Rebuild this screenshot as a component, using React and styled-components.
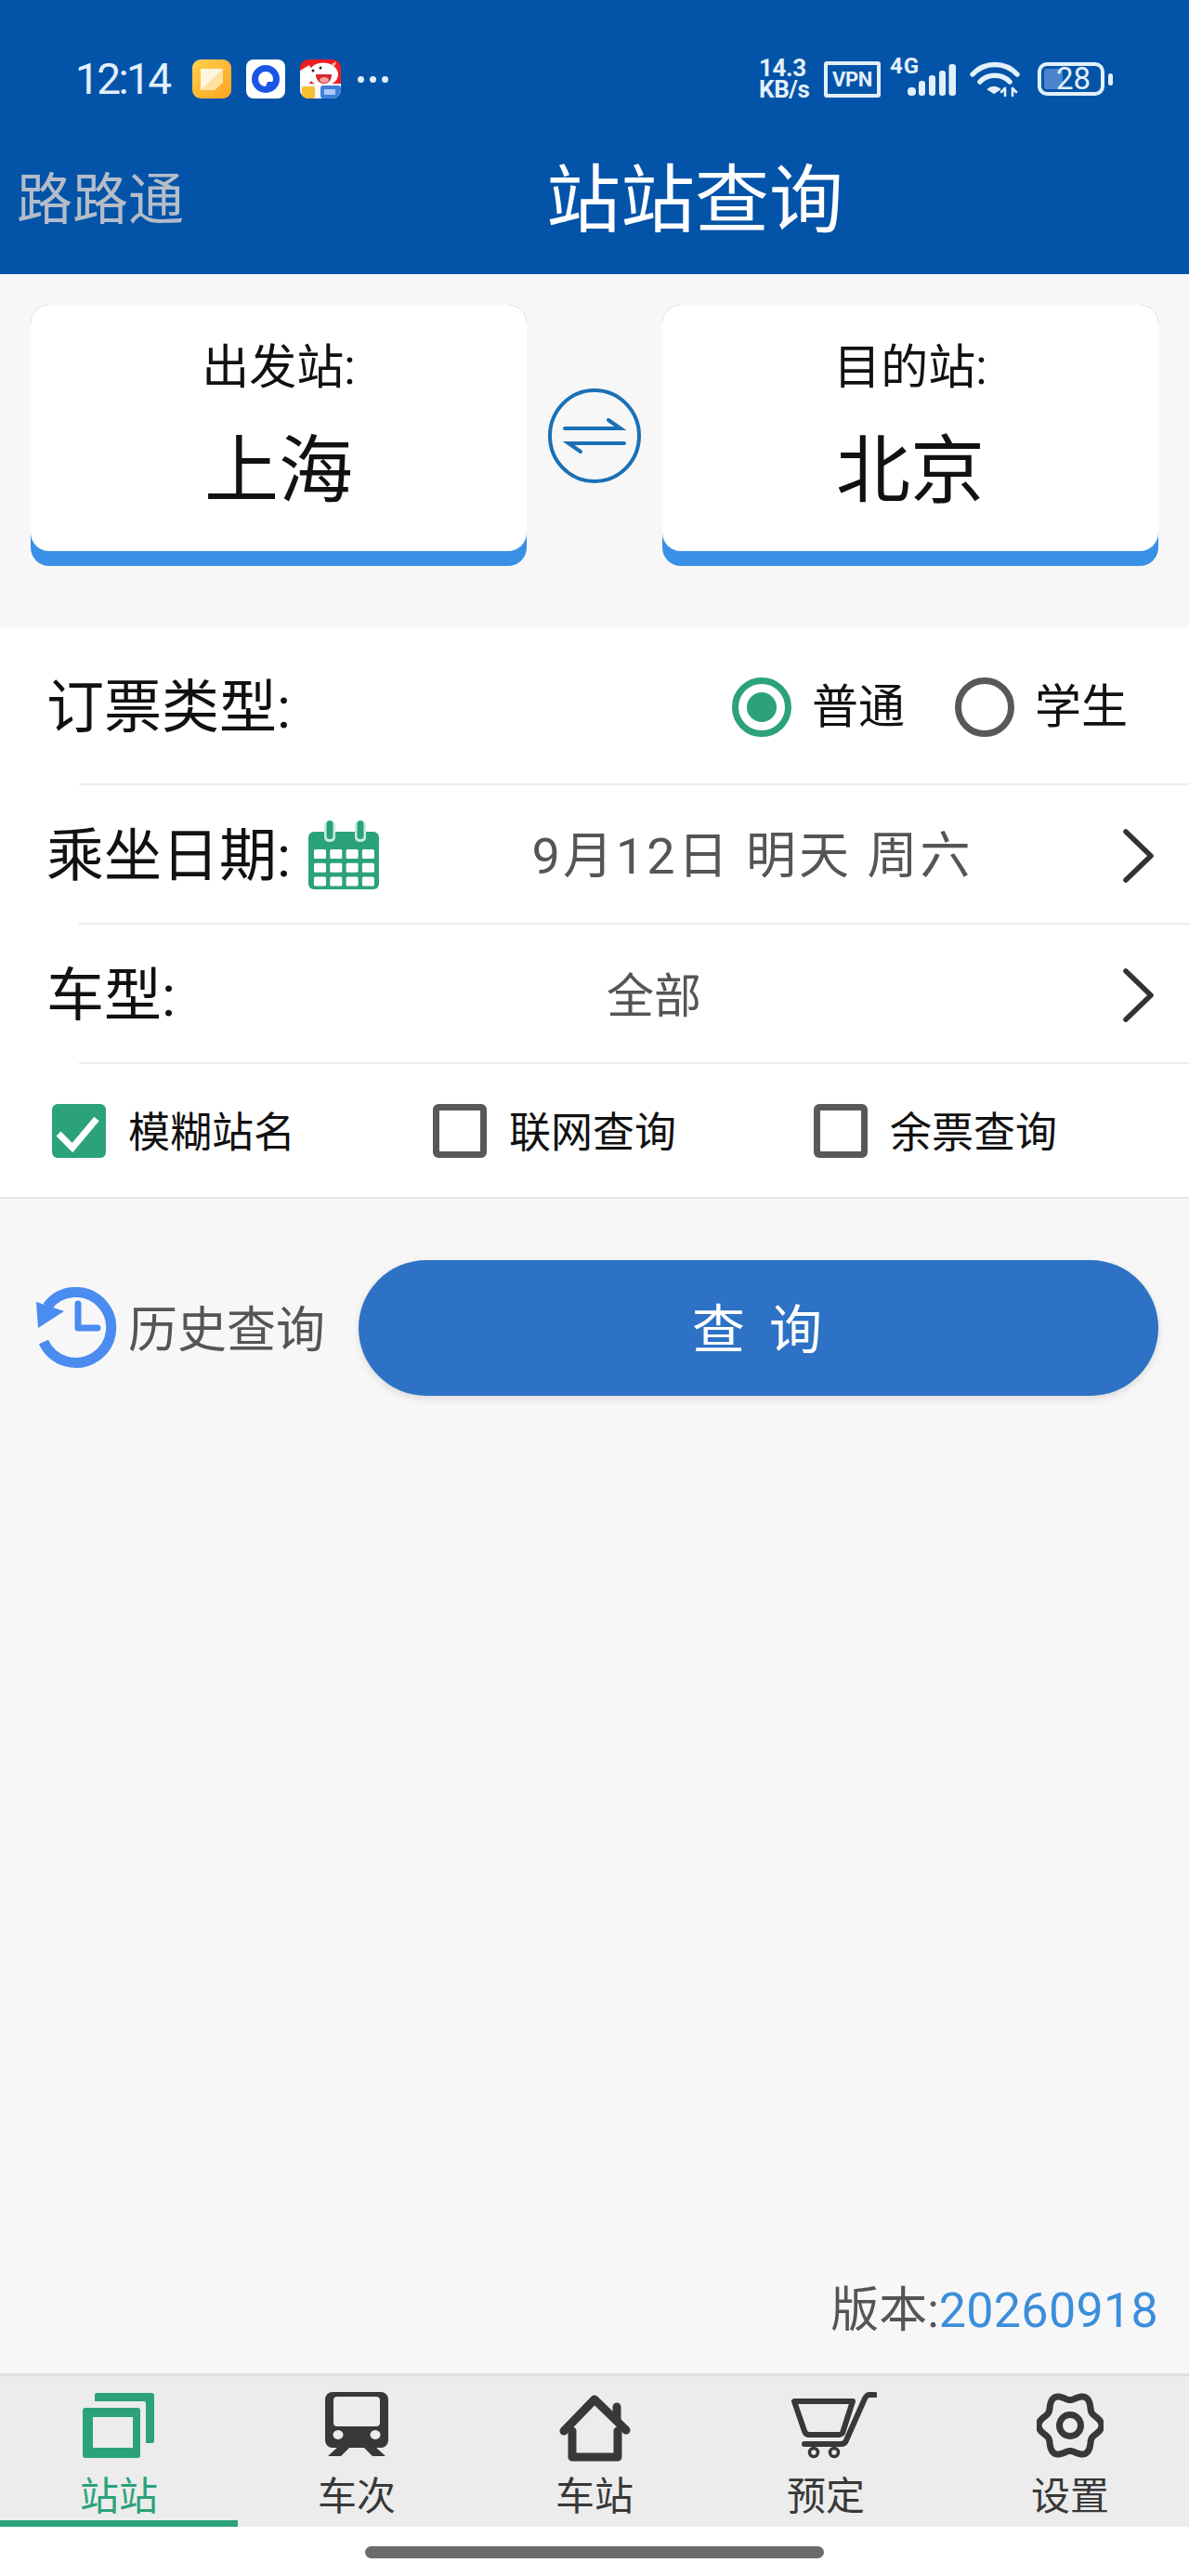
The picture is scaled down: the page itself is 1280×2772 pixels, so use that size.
import React from "react";
import styled, { createGlobalStyle } from "styled-components";

const GlobalStyle = createGlobalStyle`
  html, body {
    margin: 0;
    padding: 0;
    background: #fff;
    font-family: Roboto, "Noto Sans CJK SC", sans-serif;
  }
  * {
    box-sizing: border-box;
  }
`;

// gear outline with six soft lobes, top of the wheel sits on a dip
const gearPath = () => {
  const pts = [];
  for (let i = 0; i < 120; i++) {
    const a = (i / 120) * Math.PI * 2;
    const r = 31 + 3.6 * Math.cos(6 * a);
    pts.push(`${(36 + r * Math.cos(a) * 0.98).toFixed(2)} ${(36 + r * Math.sin(a)).toFixed(2)}`);
  }
  return `M${pts.join("L")}Z`;
};

const NoteIcon = () => (
  <svg width="42" height="42" viewBox="0 0 42 42">
    <defs>
      <linearGradient id="noteBg" x1="0" y1="0" x2="1" y2="1">
        <stop offset="0" stopColor="#ffd24f" />
        <stop offset="1" stopColor="#fda31e" />
      </linearGradient>
    </defs>
    <rect width="42" height="42" rx="9" fill="url(#noteBg)" />
    <path d="M9 10h24v15l-9 8H9z" fill="#ffe2a0" />
    <path d="M9 10h24L9 33z" fill="#fff6df" />
  </svg>
);

const CircleAppIcon = () => (
  <svg width="42" height="42" viewBox="0 0 42 42">
    <rect width="42" height="42" rx="8" fill="#fff" />
    <circle cx="21" cy="21" r="11.5" fill="none" stroke="#1a55e6" strokeWidth="7" />
    <path d="M23 24h8l-5 9-5-4z" fill="#1a55e6" />
  </svg>
);

const DogAppIcon = () => (
  <svg width="44" height="42" viewBox="0 0 44 42">
    <defs>
      <clipPath id="dogClip">
        <rect width="44" height="42" rx="9" />
      </clipPath>
    </defs>
    <g clipPath="url(#dogClip)">
      <rect width="44" height="42" fill="#ee1c25" />
      <rect y="26" width="44" height="16" fill="#f7f7f7" />
      <path d="M0 12 L10 6 L16 18 L8 28 L0 26z" fill="#fff" />
      <ellipse cx="25" cy="16" rx="16" ry="12.5" fill="#fff" />
      <path d="M17 16h17c0 7-4 10-8.5 10S17 22 17 16z" fill="#d5272e" />
      <ellipse cx="26" cy="22" rx="5" ry="3" fill="#f7a3a0" />
      <circle cx="14" cy="12" r="1.5" fill="#222" />
      <circle cx="22" cy="9" r="1.5" fill="#222" />
      <path d="M34 5l5-3-2 6z" fill="#f6b9a0" />
      <rect x="2" y="29" width="14" height="13" rx="2" fill="#f7c02f" />
      <rect x="22" y="28" width="22" height="14" rx="3" fill="#3f7fdc" />
      <rect x="26" y="32" width="12" height="6" fill="#a9c8f4" />
    </g>
  </svg>
);

const SignalIcon = () => (
  <svg width="52" height="36" viewBox="0 0 52 36" fill="#e3f0fb">
    <rect x="0" y="26" width="9" height="9" rx="4" />
    <rect x="12" y="19" width="7" height="16" rx="3" />
    <rect x="23" y="13" width="7" height="22" rx="3" />
    <rect x="34" y="8" width="7" height="27" rx="3" />
    <rect x="44.5" y="1" width="7.5" height="34" rx="3" />
  </svg>
);

const WifiIcon = () => (
  <svg width="54" height="40" viewBox="0 0 54 40" fill="none" stroke="#e3f0fb" strokeWidth="5.5" strokeLinecap="round">
    <path d="M3 15C16 1 38 1 51 15" />
    <path d="M11 23C19 14 35 14 43 23" />
    <path d="M26 35l-6-4c3-3 9-3 12 0z" fill="#e3f0fb" strokeWidth="2" />
    <path d="M38 38v-7M34 34l4-4M46 30v8M46 30l4 4" strokeWidth="2.6" />
  </svg>
);

const SwapIcon = () => (
  <svg width="100" height="102" viewBox="0 0 100 102" fill="none" stroke="#1a70b6" strokeLinecap="round">
    <ellipse cx="50" cy="51" rx="48" ry="49" strokeWidth="4" />
    <path d="M18 43H78L65 34" strokeWidth="4" />
    <path d="M82 59H22L35 68" strokeWidth="4" />
  </svg>
);

const CalendarIcon = () => (
  <svg width="76" height="76" viewBox="0 0 76 76">
    <rect y="12" width="76" height="62" rx="6" fill="#2ba27a" />
    {[0, 1, 2].map((row) =>
      [0, 1, 2, 3].map((col) => (
        <rect key={`${row}-${col}`} x={6 + col * 17.3} y={31 + row * 14.7} width="13" height="10" rx="1.5" fill="#fff" />
      ))
    )}
    <rect x="17" y="0" width="12" height="23" rx="5" fill="#c9ecdf" />
    <rect x="50" y="0" width="12" height="23" rx="5" fill="#c9ecdf" />
    <rect x="19.5" y="0" width="7" height="20" rx="3.5" fill="#2ba27a" />
    <rect x="52.5" y="0" width="7" height="20" rx="3.5" fill="#2ba27a" />
  </svg>
);

const Chevron = () => (
  <svg width="34" height="58" viewBox="0 0 34 58" fill="none" stroke="#333" strokeWidth="5.5" strokeLinecap="round" strokeLinejoin="round">
    <path d="M3 3L30 29L3 55" />
  </svg>
);

const CheckMark = () => (
  <svg width="58" height="58" viewBox="0 0 58 58" fill="none" stroke="#fff" strokeWidth="7">
    <path d="M7 32L22 47L48 16" />
  </svg>
);

const HistoryIcon = () => (
  <svg width="90" height="90" viewBox="0 0 90 90" fill="none">
    <path d="M12 22A38 38 0 1 1 8 60" stroke="#4a8cf0" strokeWidth="11" />
    <path d="M0 17L30 27L2 45z" fill="#4a8cf0" />
    <path d="M45 19V45H66" stroke="#4a8cf0" strokeWidth="7" strokeLinecap="round" strokeLinejoin="round" />
  </svg>
);

const StationTabIcon = ({ color }) => (
  <svg width="78" height="72" viewBox="0 0 78 72" fill={color}>
    <path d="M13 3a2 2 0 0 1 2-2h59a3 3 0 0 1 3 3v49a2 2 0 0 1-2 2h-7V12a2 2 0 0 0-2-2H13z" />
    <path fillRule="evenodd" d="M3 17h56a3 3 0 0 1 3 3v48a3 3 0 0 1-3 3H3a3 3 0 0 1-3-3V20a3 3 0 0 1 3-3zM11 27v33h43V27z" />
  </svg>
);

const TrainTabIcon = ({ color }) => (
  <svg width="68" height="70" viewBox="0 0 68 70" fill={color}>
    <path
      fillRule="evenodd"
      d="M8 0h52a8 8 0 0 1 8 8v44a8 8 0 0 1-8 8H8a8 8 0 0 1-8-8V8a8 8 0 0 1 8-8zM13 5a4 4 0 0 0-4 4v24a4 4 0 0 0 4 4h42a4 4 0 0 0 4-4V9a4 4 0 0 0-4-4zM14 41a5.5 5 0 1 0 .01 0zM54 41a5.5 5 0 1 0 .01 0z"
    />
    <path d="M15 58h13L17 69H3zM40 58h13l12 11H51z" />
  </svg>
);

const HomeTabIcon = ({ color }) => (
  <svg width="80" height="76" viewBox="0 0 80 76" fill="none" stroke={color} strokeWidth="9" strokeLinecap="round" strokeLinejoin="round">
    <path d="M7 42L40 8L74 41" />
    <path d="M16 42V70H65V42" />
    <path d="M64 16V30" />
  </svg>
);

const CartTabIcon = ({ color }) => (
  <svg width="92" height="74" viewBox="0 0 92 74" fill="none" stroke={color} strokeLinecap="round" strokeLinejoin="round">
    <path d="M3 10H66L55 44C54 46 52 46 50 46H19C17 46 15 45 14 42z" strokeWidth="6" />
    <path d="M90 3H84C81 3 80 5 79 7L59 52C58 55 56 56 53 56H14" strokeWidth="6" />
    <circle cx="24" cy="65" r="4.5" strokeWidth="3.5" />
    <circle cx="46" cy="65" r="4.5" strokeWidth="3.5" />
  </svg>
);

const GearTabIcon = ({ color }) => (
  <svg width="72" height="72" viewBox="0 0 72 72" fill="none" stroke={color} strokeWidth="7">
    <path d={gearPath()} strokeLinejoin="round" />
    <circle cx="36" cy="36" r="11.5" />
  </svg>
);

const tabs = [
  { label: "站站", Icon: StationTabIcon, active: true },
  { label: "车次", Icon: TrainTabIcon },
  { label: "车站", Icon: HomeTabIcon },
  { label: "预定", Icon: CartTabIcon, iconNudge: 3, labelNudge: -14 },
  { label: "设置", Icon: GearTabIcon },
];

function App() {
  return (
    <Page>
      <GlobalStyle />
      <Header>
        <StatusBar>
          <StatusLeft>
            <Clock>12:14</Clock>
            <AppIcons>
              <NoteIcon />
              <CircleAppIcon />
              <DogAppIcon />
            </AppIcons>
            <MoreDots>
              <i />
              <i />
              <i />
            </MoreDots>
          </StatusLeft>
          <StatusRight>
            <NetSpeed>
              <span>14.3</span>
              <span>KB/s</span>
            </NetSpeed>
            <VpnBadge>VPN</VpnBadge>
            <Signal>
              <NetType>4G</NetType>
              <SignalIcon />
            </Signal>
            <WifiIcon />
            <Battery>
              <BatteryBody>
                <BatteryFill />
                <BatteryText>28</BatteryText>
              </BatteryBody>
              <BatteryCap />
            </Battery>
          </StatusRight>
        </StatusBar>
        <NavBar>
          <AppName>路路通</AppName>
          <Title>站站查询</Title>
        </NavBar>
      </Header>

      <Stations>
        <StationCard>
          <StationInner>
            <StationLabel>出发站:</StationLabel>
            <StationName>上海</StationName>
          </StationInner>
        </StationCard>
        <SwapIcon />
        <StationCard>
          <StationInner>
            <StationLabel>目的站:</StationLabel>
            <StationName>北京</StationName>
          </StationInner>
        </StationCard>
      </Stations>

      <Form>
        <TypeRow>
          <RowLabel>订票类型:</RowLabel>
          <RadioGroup>
            <RadioItem>
              <Radio $checked />
              <RadioText>普通</RadioText>
            </RadioItem>
            <RadioItem>
              <Radio />
              <RadioText>学生</RadioText>
            </RadioItem>
          </RadioGroup>
        </TypeRow>
        <Divider />
        <Row>
          <RowLabel>乘坐日期:</RowLabel>
          <CalendarWrap>
            <CalendarIcon />
          </CalendarWrap>
          <RowValue $large>9月12日 明天 周六</RowValue>
          <Chevron />
        </Row>
        <Divider />
        <Row>
          <RowLabel>车型:</RowLabel>
          <RowValue>全部</RowValue>
          <Chevron />
        </Row>
        <Divider />
        <CheckRow>
          <CheckItem>
            <CheckBox $checked>
              <CheckMark />
            </CheckBox>
            <CheckText>模糊站名</CheckText>
          </CheckItem>
          <CheckItem>
            <CheckBox />
            <CheckText>联网查询</CheckText>
          </CheckItem>
          <CheckItem>
            <CheckBox />
            <CheckText>余票查询</CheckText>
          </CheckItem>
        </CheckRow>
      </Form>

      <Main>
        <Actions>
          <HistoryLink>
            <HistoryIcon />
            <HistoryText>历史查询</HistoryText>
          </HistoryLink>
          <QueryButton>查 询</QueryButton>
        </Actions>
        <Version>
          版本:<VersionNumber>20260918</VersionNumber>
        </Version>
      </Main>

      <TabBar>
        {tabs.map(({ label, Icon, active, iconNudge, labelNudge }) => (
          <Tab key={label} $active={active}>
            <TabIconBox $nudge={iconNudge}>
              <Icon color={active ? "#2ba27a" : "#383838"} />
            </TabIconBox>
            <TabLabel $active={active} $nudge={labelNudge}>
              {label}
            </TabLabel>
          </Tab>
        ))}
      </TabBar>
      <HomeArea>
        <HomeIndicator />
      </HomeArea>
    </Page>
  );
}

const Page = styled.div`
  width: 1280px;
  height: 2772px;
  display: flex;
  flex-direction: column;
  background: #f7f7f7;
  overflow: hidden;
`;

const Header = styled.header`
  height: 295px;
  padding-top: 60px;
  background: #0354a8;
  flex-shrink: 0;
`;

const StatusBar = styled.div`
  height: 50px;
  padding: 0 82px 0 81px;
  display: flex;
  align-items: center;
  justify-content: space-between;
  color: #e3f0fb;
`;

const StatusLeft = styled.div`
  display: flex;
  align-items: center;
`;

const Clock = styled.span`
  width: 126px;
  font-size: 46px;
  letter-spacing: -2.6px;
  line-height: 50px;
`;

const AppIcons = styled.div`
  display: flex;
  align-items: center;
  gap: 16px;

  svg {
    display: block;
  }
`;

const MoreDots = styled.div`
  display: flex;
  gap: 6px;
  margin-left: 18px;

  i {
    width: 7px;
    height: 7px;
    border-radius: 50%;
    background: #e3f0fb;
  }
`;

const StatusRight = styled.div`
  display: flex;
  align-items: center;
`;

const NetSpeed = styled.div`
  width: 70px;
  display: flex;
  flex-direction: column;
  font-size: 26px;
  font-weight: 700;
  line-height: 23px;
  letter-spacing: -0.4px;
`;

const VpnBadge = styled.div`
  width: 61px;
  height: 39px;
  border: 4px solid #e3f0fb;
  border-radius: 3px;
  display: flex;
  align-items: center;
  justify-content: center;
  font-size: 22px;
  font-weight: 700;
  letter-spacing: -0.3px;
`;

const Signal = styled.div`
  position: relative;
  width: 52px;
  height: 36px;
  margin: 2px 15px 0 29px;

  svg {
    display: block;
  }
`;

const NetType = styled.span`
  position: absolute;
  left: -19px;
  top: -9px;
  font-size: 24px;
  line-height: 24px;
  font-weight: 700;
  letter-spacing: 1px;
`;

const Battery = styled.div`
  display: flex;
  align-items: center;
  gap: 4px;
  margin-left: 19px;
`;

const BatteryBody = styled.div`
  position: relative;
  width: 72px;
  height: 36px;
  border: 4px solid #e3f0fb;
  border-radius: 10px;
  padding: 3px;
`;

const BatteryFill = styled.div`
  width: 20px;
  height: 100%;
  border-radius: 3px 0 0 3px;
  background: #4a84cc;
`;

const BatteryText = styled.span`
  position: absolute;
  left: 16px;
  top: -4px;
  font-size: 33px;
  line-height: 36px;
`;

const BatteryCap = styled.div`
  width: 5px;
  height: 13px;
  border-radius: 3px;
  background: #e3f0fb;
`;

const NavBar = styled.div`
  height: 185px;
  padding: 26px 0 0 18px;
  display: flex;
  align-items: center;
`;

const AppName = styled.div`
  width: 180px;
  font-size: 60px;
  line-height: 1;
  white-space: nowrap;
  color: #b4bcc9;
`;

const Title = styled.h1`
  margin: 0 0 0 390px;
  font-size: 80px;
  font-weight: 400;
  line-height: 1;
  white-space: nowrap;
  color: #fff;
`;

const Stations = styled.section`
  height: 380px;
  padding: 33px 33px 66px;
  display: flex;
  align-items: center;
  justify-content: space-between;
  flex-shrink: 0;
`;

const StationCard = styled.div`
  width: 534px;
  height: 281px;
  border-radius: 20px;
  background: #3a90e6;
`;

const StationInner = styled.div`
  height: 265px;
  padding-top: 40px;
  border-radius: 20px;
  background: #fff;
  display: flex;
  flex-direction: column;
  align-items: center;
  color: #111;
`;

const StationLabel = styled.div`
  font-size: 51px;
  line-height: 56px;
`;

const StationName = styled.div`
  margin-top: 33px;
  font-size: 80px;
  line-height: 100px;
`;

const Form = styled.section`
  background: #fff;
  border-bottom: 2px solid #e6e6e6;
  flex-shrink: 0;
`;

const Row = styled.div`
  height: 148px;
  padding: 4px 37px 0 50px;
  display: flex;
  align-items: center;
`;

const TypeRow = styled(Row)`
  height: 168px;
  justify-content: space-between;
  padding-right: 66px;
`;

const RowLabel = styled.div`
  padding-top: 2px;
  font-size: 62px;
  line-height: 1;
  color: #111;
  white-space: nowrap;
`;

const RadioGroup = styled.div`
  display: flex;
  gap: 54px;
`;

const RadioItem = styled.div`
  display: flex;
  align-items: center;
  gap: 22px;
`;

const Radio = styled.div`
  width: 64px;
  height: 64px;
  border-radius: 50%;
  border: 7px solid ${(p) => (p.$checked ? "#2ba27a" : "#585858")};
  display: flex;
  align-items: center;
  justify-content: center;

  &::after {
    content: "";
    width: 32px;
    height: 32px;
    border-radius: 50%;
    background: ${(p) => (p.$checked ? "#2ba27a" : "transparent")};
  }
`;

const RadioText = styled.span`
  font-size: 50px;
  line-height: 1;
  color: #111;
`;

const Divider = styled.div`
  height: 2px;
  margin-left: 85px;
  background: #ececec;
`;

const CalendarWrap = styled.div`
  margin: 0 0 0 19px;
  height: 76px;

  svg {
    display: block;
  }
`;

const RowValue = styled.div`
  flex: 1;
  padding: 2px 0 0 ${(p) => (p.$large ? "3px" : "10px")};
  text-align: center;
  font-size: ${(p) => (p.$large ? "54px" : "51px")};
  letter-spacing: ${(p) => (p.$large ? "3px" : "0")};
  line-height: 1;
  color: #555;
  white-space: pre;
`;

const CheckRow = styled.div`
  height: 143px;
  padding-left: 56px;
  display: grid;
  grid-template-columns: repeat(3, 410px);
  align-items: center;
`;

const CheckItem = styled.div`
  display: flex;
  align-items: center;
  gap: 24px;
`;

const CheckBox = styled.div`
  width: 58px;
  height: 58px;
  border-radius: 6px;
  background: ${(p) => (p.$checked ? "#2ba27a" : "transparent")};
  border: ${(p) => (p.$checked ? "none" : "7px solid #585858")};

  svg {
    display: block;
  }
`;

const CheckText = styled.span`
  padding-top: 6px;
  font-size: 45px;
  line-height: 1;
  color: #111;
`;

const Main = styled.main`
  flex: 1;
  display: flex;
  flex-direction: column;
  justify-content: space-between;
  padding: 66px 33px 37px 39px;
`;

const Actions = styled.div`
  display: flex;
  align-items: center;
`;

const HistoryLink = styled.div`
  width: 347px;
  display: flex;
  align-items: center;
  gap: 9px;

  svg {
    display: block;
    flex-shrink: 0;
  }
`;

const HistoryText = styled.span`
  padding-top: 6px;
  font-size: 53px;
  line-height: 1;
  color: #555;
  white-space: nowrap;
`;

const QueryButton = styled.button`
  flex: 1;
  height: 146px;
  padding: 0 0 6px 3px;
  border: 0;
  border-radius: 73px;
  background: #2d72c4;
  box-shadow: 0 3px 8px rgba(0, 0, 0, 0.12);
  color: #fff;
  font: inherit;
  font-size: 57px;
  letter-spacing: 6px;
`;

const Version = styled.div`
  align-self: flex-end;
  font-size: 52px;
  line-height: 60px;
  color: #555;
`;

const VersionNumber = styled.span`
  color: #3a8edb;
  letter-spacing: 0.3px;
`;

const TabBar = styled.nav`
  height: 165px;
  display: grid;
  grid-template-columns: repeat(5, 256px);
  background: #ececec;
  border-top: 3px solid #dfdfdf;
  flex-shrink: 0;
`;

const Tab = styled.div`
  display: flex;
  flex-direction: column;
  align-items: center;
  border-bottom: 7px solid ${(p) => (p.$active ? "#2ba27a" : "transparent")};
`;

const TabIconBox = styled.div`
  height: 106px;
  padding-top: 17px;
  margin-left: ${(p) => p.$nudge || 0}px;
  display: flex;
  align-items: flex-start;
  justify-content: center;

  svg {
    display: block;
  }
`;

const TabLabel = styled.span`
  margin-left: ${(p) => p.$nudge || 0}px;
  font-size: 42px;
  line-height: 48px;
  color: ${(p) => (p.$active ? "#2ba27a" : "#383838")};
`;

const HomeArea = styled.div`
  height: 53px;
  background: #fff;
  display: flex;
  justify-content: center;
  padding-top: 21px;
  flex-shrink: 0;
`;

const HomeIndicator = styled.div`
  width: 494px;
  height: 13px;
  border-radius: 7px;
  background: #6b6b6b;
`;

export default App;
